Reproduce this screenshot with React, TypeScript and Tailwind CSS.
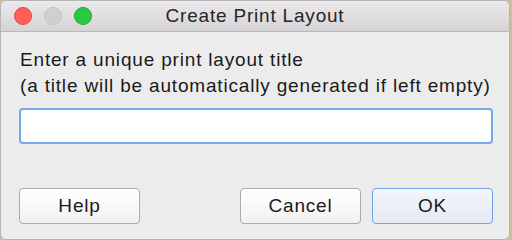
export default function App() {
  return (
    <div className="flex h-[240px] w-[512px] bg-[#c9bf98]" style={{ fontFamily: '"Liberation Sans", Arial, sans-serif' }}>
      <div className="flex h-[240px] w-[510px] flex-col overflow-hidden rounded-[6px] border border-[#b4b4b4] bg-[#ececec]">
        {/* Title bar */}
        <div className="relative flex h-[31px] shrink-0 items-center border-b border-[#b8b8b8] bg-gradient-to-b from-[#ebe9eb] to-[#d5d3d5]">
          <div className="flex items-center gap-[12px] pl-[13px]">
            <span className="h-[18px] w-[18px] rounded-full border border-[#e2463f] bg-[#fd5f57]" />
            <span className="h-[18px] w-[18px] rounded-full border border-[#c4c4c4] bg-[#d0d0d0]" />
            <span className="h-[18px] w-[18px] rounded-full border border-[#1aab29] bg-[#28c840]" />
          </div>
          <div className="absolute inset-0 flex items-center justify-center text-[19px] tracking-[0.8px] text-[#262626]">
            Create Print Layout
          </div>
        </div>

        {/* Body */}
        <div className="flex flex-1 flex-col px-[18px] pt-[15px]">
          <div className="pl-[1px] text-[19px] leading-[26px] tracking-[0.82px] text-[#1a1a1a]">
            <div>Enter a unique print layout title</div>
            <div>(a title will be automatically generated if left empty)</div>
          </div>
          <input
            className="mt-[9px] h-[36px] w-[474px] rounded-[4px] border-2 border-[#75a7ea] bg-white outline-none"
            type="text"
          />
          <div className="mt-[44px] flex w-[474px] items-center text-[19px] tracking-[0.8px] text-[#1a1a1a]">
            <button className="h-[36px] w-[121px] rounded-[4px] border border-[#ababab] bg-gradient-to-b from-white to-[#f1f1f1]">
              Help
            </button>
            <div className="flex-1" />
            <button className="h-[36px] w-[121px] rounded-[4px] border border-[#ababab] bg-gradient-to-b from-white to-[#f1f1f1]">
              Cancel
            </button>
            <button className="ml-[11px] h-[36px] w-[121px] rounded-[4px] border border-[#6ea3ec] bg-gradient-to-b from-[#f3f6fb] to-[#e4eaf3]">
              OK
            </button>
          </div>
        </div>
      </div>
    </div>
  );
}
